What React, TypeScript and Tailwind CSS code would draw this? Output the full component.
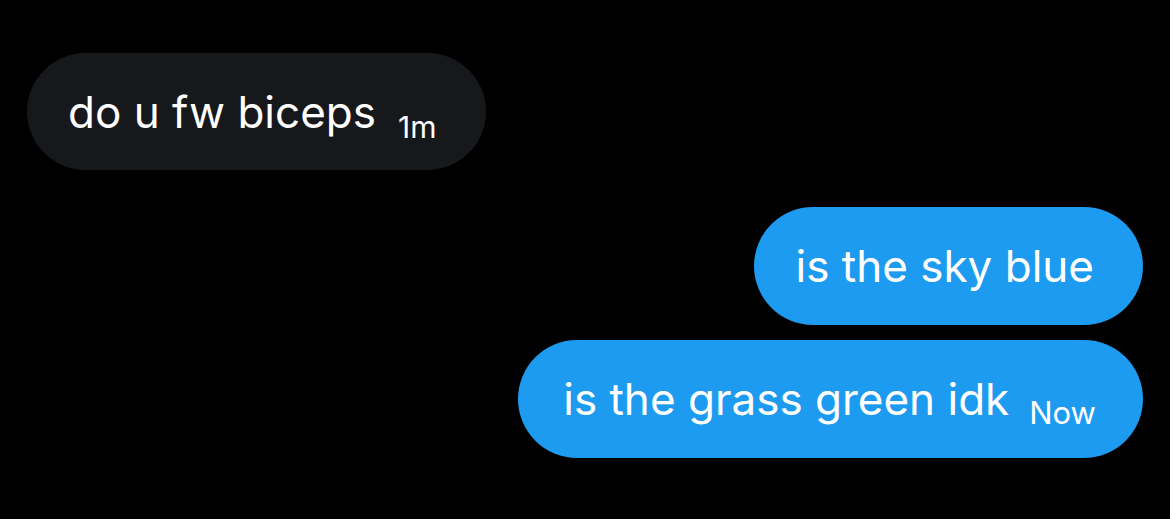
export default function App() {
  return (
    <div
      className="w-[1170px] h-[519px] bg-black overflow-hidden flex flex-col pl-[27px] pr-[27px] pt-[53px]"
      style={{ fontFamily: "Inter, 'Noto Sans', sans-serif" }}
    >
      <div className="self-start h-[117px] rounded-full bg-[#16181c] pl-[41px] pr-[50px] flex items-center text-white">
        <div className="flex items-baseline">
          <span className="text-[44px] leading-none">do u fw biceps</span>
          <span className="text-[30px] leading-none ml-[22px] translate-y-[10px]">1m</span>
        </div>
      </div>

      <div className="self-end mt-[37px] h-[118px] rounded-full bg-[#1d9bf0] pl-[42px] pr-[49px] flex items-center text-white">
        <span className="text-[44px] leading-none">is the sky blue</span>
      </div>

      <div className="self-end mt-[15px] h-[118px] rounded-full bg-[#1d9bf0] pl-[45px] pr-[47px] flex items-center text-white">
        <div className="flex items-baseline">
          <span className="text-[44px] leading-none">is the grass green idk</span>
          <span className="text-[31px] leading-none ml-[20px] translate-y-[9px]">Now</span>
        </div>
      </div>
    </div>
  )
}
